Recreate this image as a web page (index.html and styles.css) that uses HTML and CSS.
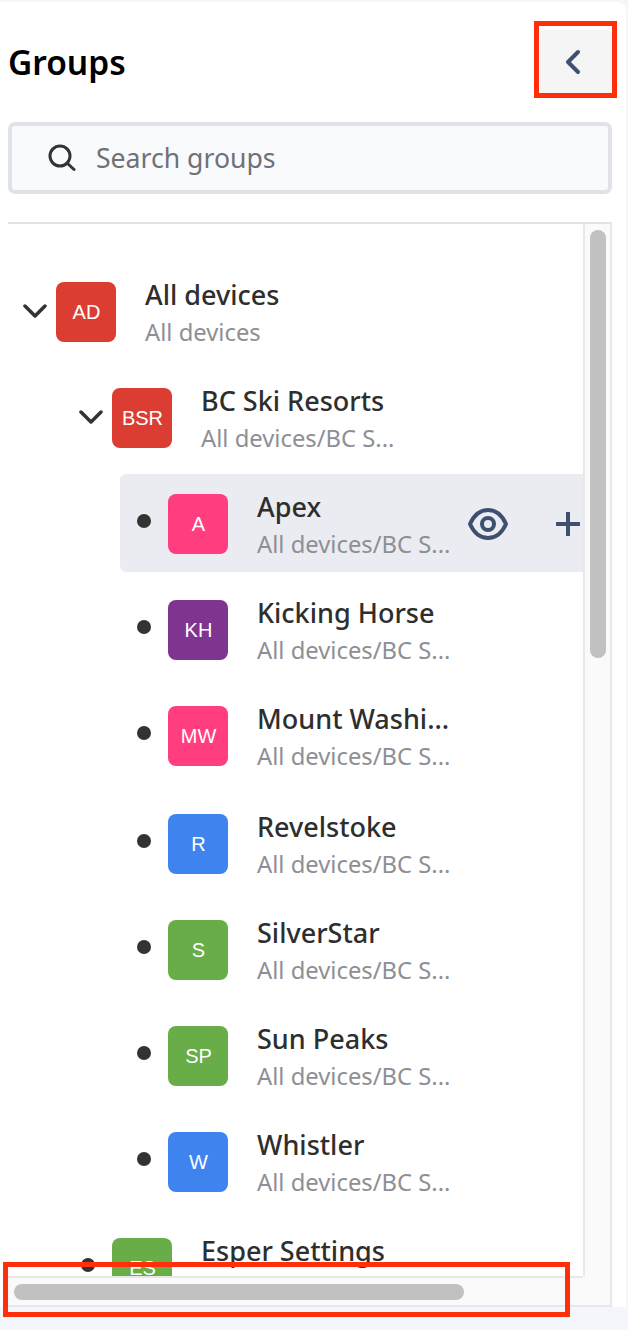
FILE: index.html
```html
<!DOCTYPE html>
<html lang="en">
<head>
  <meta charset="UTF-8" />
  <meta name="viewport" content="width=device-width, initial-scale=1.0" />
  <title>Groups</title>
  <link rel="stylesheet" href="styles.css">
</head>
<body>
  <div class="panel">
    <div class="header">
      <h2>Groups</h2>
      <button class="collapse">
        <svg width="16" height="26" viewBox="0 0 16 26"><path d="M13 3 3 13l10 10" /></svg>
      </button>
    </div>

    <div class="search">
      <svg width="28" height="28" viewBox="0 0 28 28"><circle cx="12" cy="12" r="10" /><path d="m19 19 7 6.500" /></svg>
      <span>Search groups</span>
    </div>

    <div class="tree">
      <div class="list">
        <div class="row depth-0">
          <div class="toggle"><svg class="chevron" width="24" height="14" viewBox="0 0 24 14"><path d="m2 2 10 10L22 2" /></svg></div>
          <div class="avatar red">AD</div>
          <div class="text"><div class="name">All devices</div><div class="path">All devices</div></div>
        </div>
        <div class="row depth-1">
          <div class="toggle"><svg class="chevron" width="24" height="14" viewBox="0 0 24 14"><path d="m2 2 10 10L22 2" /></svg></div>
          <div class="avatar red">BSR</div>
          <div class="text"><div class="name">BC Ski Resorts</div><div class="path">All devices/BC S...</div></div>
        </div>
        <div class="row depth-2 active">
          <div class="toggle"><span class="dot"></span></div>
          <div class="avatar pink">A</div>
          <div class="text"><div class="name">Apex</div><div class="path">All devices/BC S...</div></div>
          <div class="actions">
            <svg width="40" height="32" viewBox="0 0 40 32"><path d="M2 16C6 7 12 2 20 2s14 5 18 14c-4 9-10 14-18 14S6 25 2 16Z" /><circle cx="20" cy="16" r="6" /></svg>
            <svg width="24" height="24" viewBox="0 0 24 24"><path d="M12 1v22M1 12h22" /></svg>
          </div>
        </div>
        <div class="row depth-2">
          <div class="toggle"><span class="dot"></span></div>
          <div class="avatar purple">KH</div>
          <div class="text"><div class="name">Kicking Horse</div><div class="path">All devices/BC S...</div></div>
        </div>
        <div class="row depth-2">
          <div class="toggle"><span class="dot"></span></div>
          <div class="avatar pink">MW</div>
          <div class="text"><div class="name">Mount Washi...</div><div class="path">All devices/BC S...</div></div>
        </div>
        <div class="row depth-2">
          <div class="toggle"><span class="dot"></span></div>
          <div class="avatar blue">R</div>
          <div class="text"><div class="name">Revelstoke</div><div class="path">All devices/BC S...</div></div>
        </div>
        <div class="row depth-2">
          <div class="toggle"><span class="dot"></span></div>
          <div class="avatar green">S</div>
          <div class="text"><div class="name">SilverStar</div><div class="path">All devices/BC S...</div></div>
        </div>
        <div class="row depth-2">
          <div class="toggle"><span class="dot"></span></div>
          <div class="avatar green">SP</div>
          <div class="text"><div class="name">Sun Peaks</div><div class="path">All devices/BC S...</div></div>
        </div>
        <div class="row depth-2">
          <div class="toggle"><span class="dot"></span></div>
          <div class="avatar blue">W</div>
          <div class="text"><div class="name">Whistler</div><div class="path">All devices/BC S...</div></div>
        </div>
        <div class="row depth-1">
          <div class="toggle"><span class="dot"></span></div>
          <div class="avatar green">ES</div>
          <div class="text"><div class="name">Esper Settings</div><div class="path">All devices/Esp...</div></div>
        </div>
      </div>
      <div class="track-v"><div class="thumb-v"></div></div>
      <div class="track-h"><div class="thumb-h"></div></div>
      <div class="corner"></div>
    </div>
  </div>

  <div class="callout callout-top"></div>
  <div class="callout callout-bottom"></div>
</body>
</html>
```

FILE: styles.css
```css
body {
  font-family: "Noto Sans", Arial, sans-serif;
  background-color: #f3f6fb;
  margin: 0;
  padding-top: 2px;
  height: 1328px;
  overflow: hidden;
  position: relative;
}
.panel {
  background-color: #ffffff;
  width: 626px;
  height: 1305px;
  box-sizing: border-box;
  padding: 28px 14px 0 8px;
  border-top-right-radius: 8px;
  display: flex;
  flex-direction: column;
}
.header {
  display: flex;
  align-items: center;
  justify-content: space-between;
  height: 64px;
}
h2 {
  margin: 0;
  font-size: 33.5px;
  font-weight: 600;
  color: #000000;
}
.collapse {
  width: 72px;
  height: 64px;
  padding: 0 6px 0 0;
  background-color: #f5f5f5;
  border: none;
  border-radius: 5px;
  display: flex;
  align-items: center;
  justify-content: center;
}
.collapse path {
  fill: none;
  stroke: #3d5070;
  stroke-width: 4;
  stroke-linecap: round;
  stroke-linejoin: round;
}
.search {
  margin-top: 28px;
  height: 72px;
  box-sizing: border-box;
  border: 4px solid #dfe2e8;
  border-radius: 7px;
  background-color: #f9fafc;
  padding-left: 36px;
  display: flex;
  align-items: center;
  gap: 20px;
  font-size: 26.6px;
  color: #6e7177;
}
.search svg {
  fill: none;
  stroke: #333333;
  stroke-width: 3;
  stroke-linecap: round;
}
.tree {
  margin-top: 28px;
  flex: 1;
  min-height: 0;
  border-top: 2px solid #e1e4e8;
  display: grid;
  grid-template-columns: 1fr 29px;
  grid-template-rows: 1fr 31px;
}
.list {
  overflow: hidden;
  padding-top: 38px;
  min-height: 0;
}
.row {
  display: flex;
  height: 98px;
  box-sizing: border-box;
  padding: 20px 0 18px;
  margin-bottom: 8px;
  border-radius: 6px 0 0 6px;
}
.row:nth-child(6) {
  margin-top: 10px;
}
.depth-1 {
  margin-left: 56px;
}
.depth-2 {
  margin-left: 112px;
}
.active {
  background-color: #eaecf1;
}
.toggle {
  width: 48px;
  flex: none;
  height: 54px;
  display: flex;
  align-items: center;
  justify-content: center;
}
.chevron {
  margin-left: 6px;
  margin-top: 4px;
}
.chevron path {
  fill: none;
  stroke: #333333;
  stroke-width: 3.5;
  stroke-linecap: round;
  stroke-linejoin: round;
}
.dot {
  width: 14px;
  height: 14px;
  border-radius: 50%;
  background-color: #333333;
}
.avatar {
  width: 60px;
  height: 60px;
  flex: none;
  box-sizing: border-box;
  padding-left: 1px;
  border-radius: 8px;
  display: flex;
  align-items: center;
  justify-content: center;
  font-family: "Liberation Sans", Arial, sans-serif;
  font-size: 20px;
  color: #ffffff;
}
.red { background-color: #db3d32; }
.pink { background-color: #ff3d7f; }
.purple { background-color: #7f3490; }
.blue { background-color: #3f83ef; }
.green { background-color: #68ad48; }
.text {
  margin: -5px 0 0 29px;
  width: 211px;
  flex: none;
  white-space: nowrap;
}
.name {
  font-size: 27px;
  font-weight: 500;
  line-height: 36px;
  color: #2e2e2e;
}
.path {
  font-size: 23.8px;
  line-height: 39px;
  color: #8e8f96;
}
.actions {
  display: flex;
  align-items: center;
  gap: 48px;
  height: 60px;
}
.actions path,
.actions circle {
  fill: none;
  stroke: #3d5070;
  stroke-width: 4;
  stroke-linecap: round;
  stroke-linejoin: round;
}
.track-v {
  background-color: #fafafa;
  border-left: 2px solid #e8e8e8;
  border-right: 2px solid #e8e8e8;
  padding: 6px 4px 0 5px;
}
.thumb-v {
  height: 428px;
  background-color: #c1c1c1;
  border-radius: 8px;
}
.track-h {
  background-color: #fafafa;
  border-top: 2px solid #e8e8e8;
  border-bottom: 2px solid #e8e8e8;
  padding: 6px 0 0 6px;
}
.thumb-h {
  width: 450px;
  height: 16px;
  background-color: #c1c1c1;
  border-radius: 8px;
}
.corner {
  background-color: #fafafa;
  border-right: 2px solid #e8e8e8;
  border-bottom: 2px solid #e8e8e8;
}
.callout {
  position: absolute;
  border: 5px solid #ff2e0b;
  box-sizing: border-box;
}
.callout-top {
  left: 534px;
  top: 21px;
  width: 83px;
  height: 77px;
}
.callout-bottom {
  left: 3px;
  top: 1262px;
  width: 567px;
  height: 55px;
}
```
